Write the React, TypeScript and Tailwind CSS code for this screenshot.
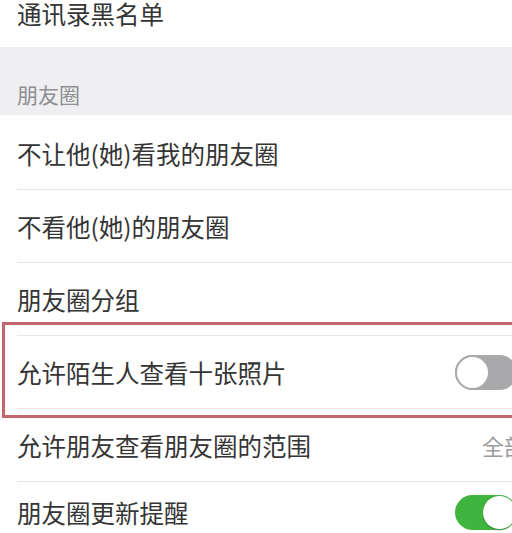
import React from "react";

const font = { fontFamily: '"Noto Sans CJK SC", "Noto Sans", sans-serif' };

function Toggle({ on }: { on: boolean }) {
  return on ? (
    <div className="relative h-[35px] w-[62px] shrink-0 rounded-full bg-[#3fb43f]">
      <div className="absolute right-[1px] top-[1px] h-[33px] w-[33px] rounded-full bg-white shadow-[0_1px_2px_rgba(0,0,0,0.25)]" />
    </div>
  ) : (
    <div className="relative h-[35px] w-[62px] shrink-0 rounded-full bg-[#a9a9ab]">
      <div className="absolute left-0 top-0 h-[35px] w-[35px] rounded-full border-[2px] border-[#a9a9ab] bg-white" />
    </div>
  );
}

function Row({
  label,
  right,
  divider = true,
  h = "h-[73px]",
  pad = "pt-[2px]",
}: {
  label: string;
  right?: React.ReactNode;
  divider?: boolean;
  h?: string;
  pad?: string;
}) {
  return (
    <div className={`relative flex ${h} items-center bg-white pl-[17px]`}>
      <div className={`flex h-full flex-1 items-center ${pad} ${divider ? "border-b border-[#e6e6e8]" : ""}`}>
        <span className="flex-1 whitespace-nowrap text-[24.5px] leading-[24px] text-[#353535]">{label}</span>
        {right}
      </div>
    </div>
  );
}

export default function App() {
  return (
    <div className="h-[533px] w-[512px] overflow-hidden bg-white" style={font}>
      <div className="flex h-[47px] items-start bg-white pl-[17px] pt-[2px]">
        <span className="text-[24.5px] leading-[24px] text-[#353535]">通讯录黑名单</span>
      </div>
      <div className="flex h-[68px] items-end bg-[#efeef1] pb-[10px] pl-[17px]">
        <span className="text-[21px] leading-[21px] text-[#8e8e93]">朋友圈</span>
      </div>
      <Row label="不让他(她)看我的朋友圈" h="h-[75px]" pad="pt-[4px]" />
      <Row label="不看他(她)的朋友圈" />
      <Row label="朋友圈分组" />
      <div className="relative">
        <Row
          label="允许陌生人查看十张照片"
          right={
            <div className="-mr-[5px] w-[62px] pb-[2px]">
              <Toggle on={false} />
            </div>
          }
        />
        <div className="pointer-events-none absolute left-[2px] right-[-20px] top-[-14px] bottom-[-9px] z-10 border-[3px] border-[#c4646c]" />
      </div>
      <Row
        label="允许朋友查看朋友圈的范围"
        right={<span className="-mr-[14px] whitespace-nowrap pb-[2px] text-[22px] leading-[22px] text-[#9b9b9b]">全部</span>}
      />
      <Row
        label="朋友圈更新提醒"
        divider={false}
        pad="pb-[12px]"
        right={
          <div className="-mr-[5px] w-[62px]">
            <Toggle on={true} />
          </div>
        }
      />
    </div>
  );
}
